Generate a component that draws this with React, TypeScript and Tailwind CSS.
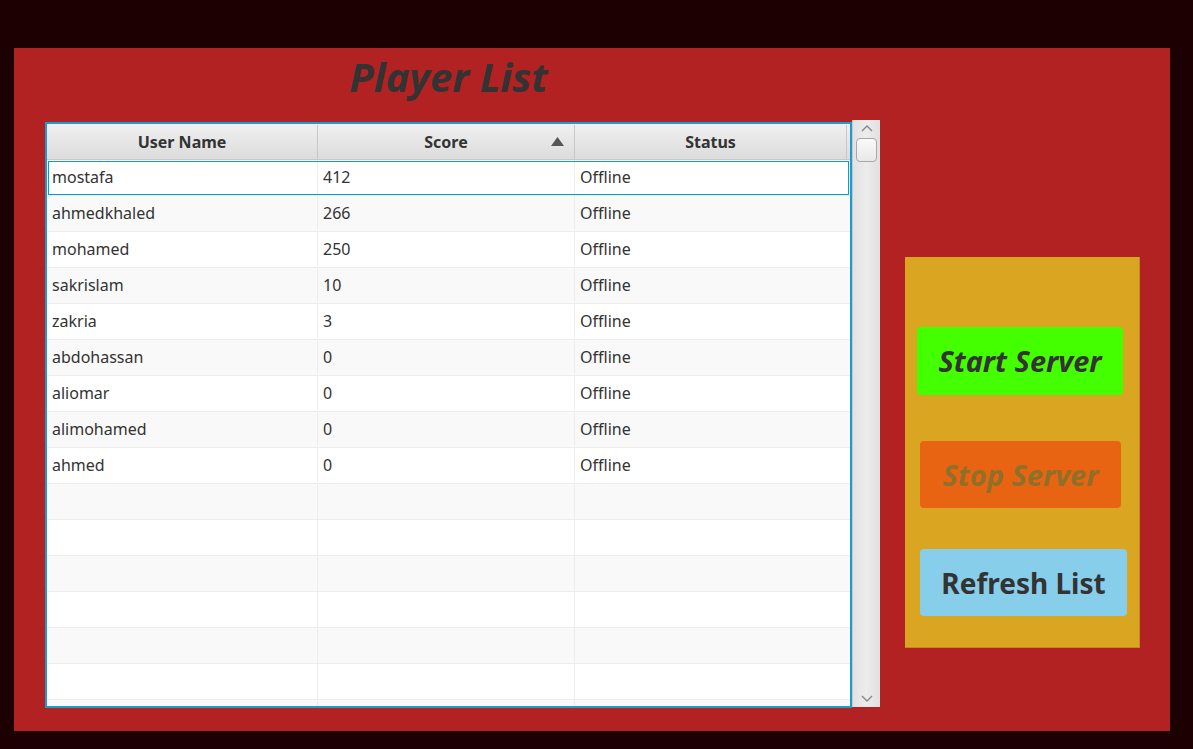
import React from 'react'

const players = [
  { name: 'mostafa', score: 412, status: 'Offline' },
  { name: 'ahmedkhaled', score: 266, status: 'Offline' },
  { name: 'mohamed', score: 250, status: 'Offline' },
  { name: 'sakrislam', score: 10, status: 'Offline' },
  { name: 'zakria', score: 3, status: 'Offline' },
  { name: 'abdohassan', score: 0, status: 'Offline' },
  { name: 'aliomar', score: 0, status: 'Offline' },
  { name: 'alimohamed', score: 0, status: 'Offline' },
  { name: 'ahmed', score: 0, status: 'Offline' },
]

const emptyRows = Array.from({ length: 7 })

export default function App() {
  return (
    <div
      className="h-[749px] w-[1193px] overflow-hidden bg-[#1c0002] pt-[48px] pb-[18px] pl-[14px] pr-[23px]"
      style={{ fontFamily: '"Noto Sans", "Open Sans", sans-serif' }}
    >
      <div className="flex h-full bg-[#b22222] pl-[31px]">
        {/* left: title + table */}
        <div className="flex w-[835px] flex-col">
          <div className="flex h-[74px] w-[807px] justify-center">
            <h1 className="mt-[4px] text-[40px] font-bold italic leading-[50px] text-[#333333]">Player List</h1>
          </div>
          <div className="flex">
            <div className="h-[586px] w-[807px] overflow-hidden border-2 border-[#1b9bd1] bg-white">
              <div className="flex h-[36px] border-b border-[#c8c8c8] bg-gradient-to-b from-[#f0f0f0] to-[#dcdcdc] pt-[1px] text-[16px] font-bold text-[#333333]">
                <div className="flex w-[271px] items-center justify-center border-r border-[#c8c8c8]">User Name</div>
                <div className="relative flex w-[257px] items-center justify-center border-r border-[#c8c8c8]">
                  Score
                  <svg className="absolute right-[10px] top-[12px]" width="13" height="9" viewBox="0 0 13 9">
                    <polygon points="6.5,0 13,9 0,9" fill="#555555" />
                  </svg>
                </div>
                <div className="flex flex-1 items-center justify-center border-r border-[#c8c8c8]">Status</div>
                <div className="w-[3px]" />
              </div>
              {players.map((p, i) => (
                <div
                  key={p.name}
                  className={`flex h-[36px] border-b border-[#ededed] pb-[1px] text-[16px] text-[#333333] ${
                    i % 2 === 0 ? 'bg-white' : 'bg-[#f9f9f9]'
                  } ${i === 0 ? 'outline outline-1 -outline-offset-2 outline-[#039ed3]' : ''}`}
                >
                  <div className="flex w-[271px] items-center border-r border-[#ededed] pl-[5px]">{p.name}</div>
                  <div className="flex w-[257px] items-center border-r border-[#ededed] pl-[5px]">{p.score}</div>
                  <div className="flex flex-1 items-center pl-[5px]">{p.status}</div>
                </div>
              ))}
              {emptyRows.map((_, i) => (
                <div
                  key={i}
                  className={`flex h-[36px] border-b border-[#ededed] ${i % 2 === 0 ? 'bg-[#f9f9f9]' : 'bg-white'}`}
                >
                  <div className="w-[271px] border-r border-[#ededed]" />
                  <div className="w-[257px] border-r border-[#ededed]" />
                  <div className="flex-1" />
                </div>
              ))}
            </div>
            {/* scrollbar */}
            <div className="-mt-[2px] flex h-[587px] w-[28px] flex-col items-center border-l border-[#c8c8c8] bg-gradient-to-r from-[#e2e2e2] via-[#ececec] to-[#e0e0e0]">
              <svg className="mt-[4px]" width="12" height="8" viewBox="0 0 12 8">
                <polyline points="1,7 6,2 11,7" fill="none" stroke="#888888" strokeWidth="1.4" />
              </svg>
              <div className="mt-[6px] h-[24px] w-[21px] rounded-[4px] border border-[#a8a8a8] bg-gradient-to-b from-[#fafafa] to-[#e8e8e8]" />
              <div className="flex-1" />
              <svg className="mb-[4px]" width="12" height="8" viewBox="0 0 12 8">
                <polyline points="1,1 6,6 11,1" fill="none" stroke="#888888" strokeWidth="1.4" />
              </svg>
            </div>
          </div>
        </div>

        {/* right: control panel */}
        <div className="ml-[25px] mt-[209px] flex h-[391px] w-[235px] flex-col border-r border-b border-[#c08a1c] bg-[#daa520]">
          <button className="ml-[12px] mt-[70px] h-[68px] w-[206px] rounded-[4px] bg-[#44ff00] text-[29px] font-bold italic text-[#333333]">
            Start Server
          </button>
          <button className="ml-[15px] mt-[46px] h-[67px] w-[201px] rounded-[4px] bg-[#e96412] text-[29px] font-bold italic text-[#8f7029]">
            Stop Server
          </button>
          <button className="ml-[15px] mt-[41px] h-[67px] w-[207px] rounded-[4px] bg-[#87ceeb] text-[28px] font-bold text-[#333333]">
            Refresh List
          </button>
        </div>
      </div>
    </div>
  )
}
